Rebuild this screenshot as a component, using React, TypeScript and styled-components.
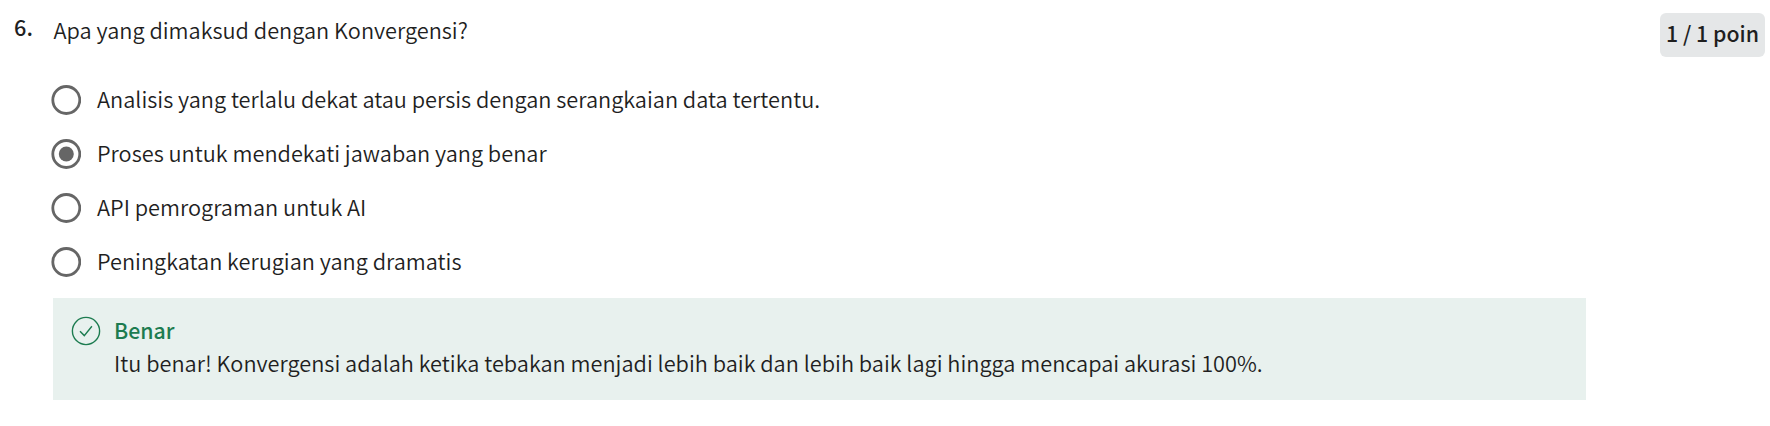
import React from "react";
import styled, { createGlobalStyle } from "styled-components";

const GlobalStyle = createGlobalStyle`
  * { box-sizing: border-box; }
  body {
    margin: 0;
    background: #fff;
    color: #1f1f1f;
    font-family: "Noto Sans CJK SC", "Noto Sans", sans-serif;
    font-size: 21.72px;
    font-weight: 350;
    line-height: 32px;
  }
`;

const Question = styled.section`
  display: flex;
  align-items: flex-start;
  width: 1770px;
  height: 426px;
  padding: 11px 5px 0 14px;
`;

const QuestionNumber = styled.div`
  width: 39px;
  font-weight: 500;
`;

const Content = styled.div`
  width: 1533px;
  padding-top: 3px;
`;

const Prompt = styled.p`
  margin: 0 0 39px 0.5px;
  white-space: nowrap;
`;

const Options = styled.div`
  display: flex;
  flex-direction: column;
  gap: 24px;
  margin: 0 0 21px -2px;
`;

const Option = styled.label`
  display: flex;
  align-items: center;
  gap: 16px;
  height: 30px;
  white-space: nowrap;
`;

const RadioIcon = styled.svg`
  flex: none;
  width: 30px;
  height: 30px;
  color: #666;
`;

const OptionText = styled.span`
  padding-bottom: 2px;
`;

const Feedback = styled.div`
  display: flex;
  gap: 13px;
  height: 102px;
  padding: 15px 18px;
  background: #e8f1ee;
`;

const CheckIcon = styled.svg`
  flex: none;
  width: 30px;
  height: 30px;
  margin-top: 3px;
  color: #1d7c50;
`;

const FeedbackTitle = styled.div`
  color: #1d7c50;
  font-size: 21.3px;
  font-weight: 500;
  line-height: 33px;
`;

const FeedbackText = styled.div`
  line-height: 33px;
  white-space: nowrap;
`;

const Points = styled.div`
  display: flex;
  align-items: center;
  justify-content: center;
  width: 105px;
  height: 44px;
  margin: 2px 0 0 auto;
  padding-bottom: 4px;
  border-radius: 6px;
  background: #e5e7e8;
  font-size: 21.3px;
  font-weight: 500;
  white-space: nowrap;
`;

const options = [
  { text: "Analisis yang terlalu dekat atau persis dengan serangkaian data tertentu.", checked: false },
  { text: "Proses untuk mendekati jawaban yang benar", checked: true },
  { text: "API pemrograman untuk AI", checked: false },
  { text: "Peningkatan kerugian yang dramatis", checked: false },
];

function Radio({ checked }: { checked: boolean }) {
  return (
    <RadioIcon viewBox="0 0 30 30">
      <circle cx="15.3" cy="15" r="13.5" fill="none" stroke="currentColor" strokeWidth="2.8" />
      {checked && <circle cx="15.3" cy="15" r="7.5" fill="currentColor" />}
    </RadioIcon>
  );
}

export default function App() {
  return (
    <>
      <GlobalStyle />
      <Question>
        <QuestionNumber>6.</QuestionNumber>
        <Content>
          <Prompt>Apa yang dimaksud dengan Konvergensi?</Prompt>
          <Options>
            {options.map((o) => (
              <Option key={o.text}>
                <Radio checked={o.checked} />
                <OptionText>{o.text}</OptionText>
              </Option>
            ))}
          </Options>
          <Feedback>
            <CheckIcon viewBox="0 0 30 30" fill="none" stroke="currentColor" strokeWidth="1.4">
              <circle cx="15" cy="15" r="13.6" />
              <path d="M9 15.2l4.3 4.4 7.6-9.3" />
            </CheckIcon>
            <div>
              <FeedbackTitle>Benar</FeedbackTitle>
              <FeedbackText>
                Itu benar! Konvergensi adalah ketika tebakan menjadi lebih baik dan lebih baik lagi hingga mencapai akurasi 100%.
              </FeedbackText>
            </div>
          </Feedback>
        </Content>
        <Points>1 / 1 poin</Points>
      </Question>
    </>
  );
}
